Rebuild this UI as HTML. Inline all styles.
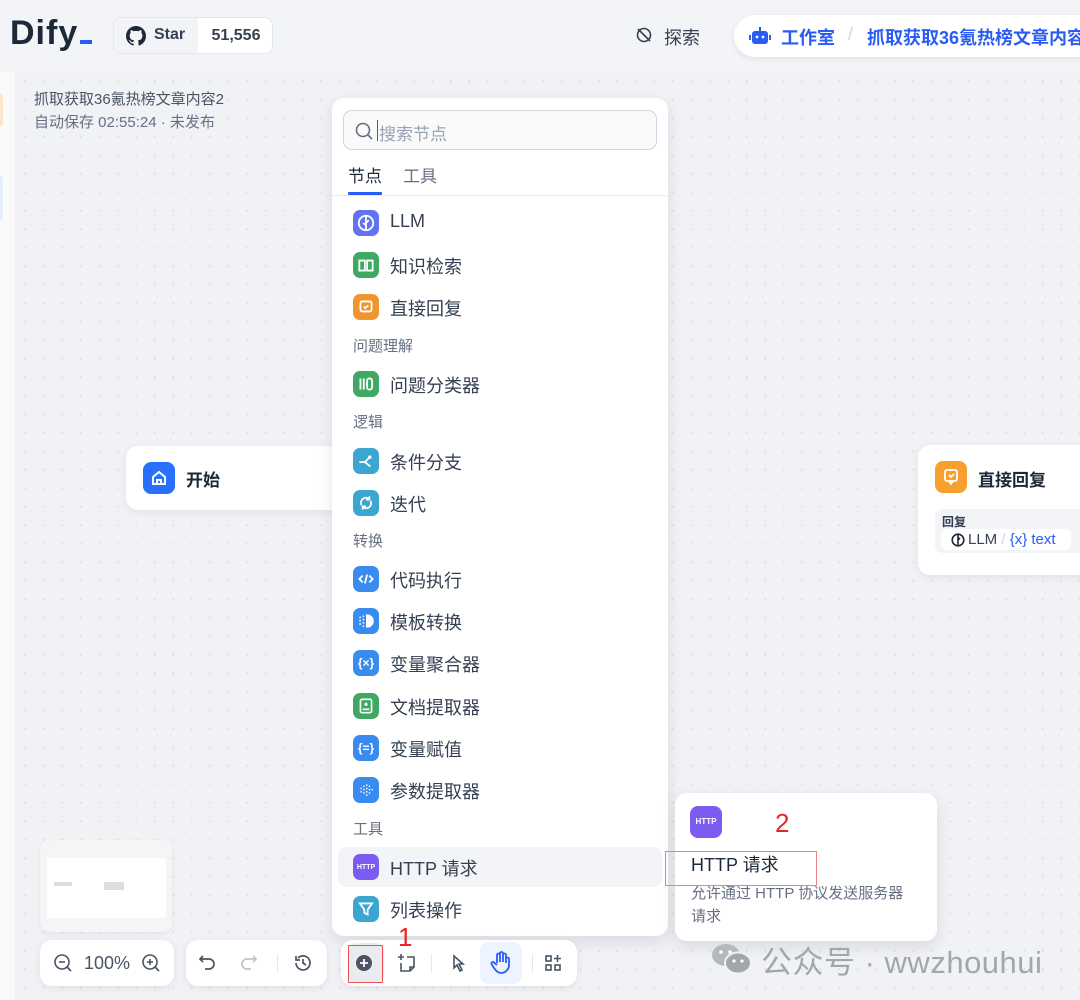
<!DOCTYPE html>
<html><head><meta charset="utf-8"><style>
*{box-sizing:border-box;margin:0;padding:0}
body{width:1080px;height:1000px;overflow:hidden;background:#f2f4f7;font-family:"Liberation Sans","Noto Sans CJK SC",sans-serif;position:relative;color:#1d2939}
.abs{position:absolute}
.canvas{left:16px;top:72px;width:1064px;height:928px;background-color:#f0f2f6;background-image:radial-gradient(#dfe2e8 1px,transparent 1.2px);background-size:18.5px 18.5px}
.card{background:#fff;border-radius:12px;box-shadow:0 2px 8px rgba(16,24,40,.08)}
.ic{position:absolute;width:26px;height:26px;border-radius:7px;left:21px;display:flex;align-items:center;justify-content:center;color:#fff;font-size:11px;font-weight:bold}
.ic svg{width:20px;height:20px}
.row{position:absolute;left:0;width:336px;height:40px}
.row span.t{position:absolute;left:58px;top:8px;font-size:18px;color:#354052}
.lbl{position:absolute;left:21px;font-size:15px;color:#676f83}
.tb{height:46px;top:940px}
</style></head><body>
<div class="abs" style="left:10px;top:14px;font-size:34px;font-weight:bold;color:#1d2939;letter-spacing:1px">Dify<span style="display:inline-block;width:12px;height:4px;background:#2a5bf5;margin-left:2px"></span></div>
<div class="abs" style="left:113px;top:17px;width:160px;height:37px;border:1px solid #e4e7ec;border-radius:8px;background:#f2f4f7;overflow:hidden">
 <svg class="abs" style="left:12px;top:8px" width="20" height="20" viewBox="0 0 16 16"><path fill="#1d2939" d="M8 0C3.58 0 0 3.58 0 8c0 3.540 2.29 6.53 5.470 7.590.4.07.55-.17.55-.38v-1.330c-2.230.48-2.7-1.070-2.7-1.070-.36-.93-.89-1.170-.89-1.170-.73-.5.06-.49.06-.49.8.06 1.230.83 1.230.83.71 1.220 1.870.87 2.330.66.07-.52.28-.87.51-1.070-1.780-.2-3.640-.89-3.640-3.950 0-.87.31-1.590.82-2.150-.08-.2-.36-1.020.08-2.120 0 0 .67-.21 2.2.82a7.6 7.6 0 0 1 4 0c1.530-1.040 2.2-.82 2.2-.82.44 1.1.16 1.920.08 2.120.51.56.82 1.270.82 2.150 0 3.070-1.870 3.750-3.650 3.950.29.25.54.73.54 1.480v2.2c0 .21.15.46.55.38A8 8 0 0 0 16 8c0-4.420-3.580-8-8-8z"/></svg>
 <span class="abs" style="left:40px;top:8px;font-size:16px;font-weight:bold;color:#354052">Star</span>
 <div class="abs" style="left:84px;top:0;width:76px;height:37px;background:#fff;font-size:16px;font-weight:bold;color:#354052;text-align:center;line-height:36px">51,556</div>
</div>
<svg class="abs" style="left:635px;top:26px" width="18" height="18" viewBox="0 0 18 18" fill="none" stroke="#354052" stroke-width="1.6"><circle cx="9" cy="9" r="6.5"/><path d="M3 3l12 12"/></svg>
<div class="abs" style="left:664px;top:24px;font-size:18px;color:#354052">探索</div>
<div class="abs" style="left:734px;top:15px;width:400px;height:42px;background:#fff;border-radius:21px;box-shadow:0 2px 6px rgba(16,24,40,.08)">
 <svg class="abs" style="left:15px;top:11px" width="22" height="20" viewBox="0 0 22 20"><rect x="3" y="5" width="16" height="13" rx="3" fill="#2a5bf5"/><rect x="10" y="1" width="2" height="4" fill="#2a5bf5"/><rect x="0" y="9" width="2" height="5" fill="#2a5bf5"/><rect x="20" y="9" width="2" height="5" fill="#2a5bf5"/><circle cx="8" cy="11" r="1.4" fill="#fff"/><circle cx="14" cy="11" r="1.4" fill="#fff"/></svg>
 <span class="abs" style="left:47px;top:9px;font-size:18px;font-weight:bold;color:#2a5bf5">工作室</span>
 <span class="abs" style="left:114px;top:9px;font-size:18px;color:#d0d5dd">/</span>
 <span class="abs" style="left:133px;top:9px;font-size:18px;font-weight:bold;color:#2a5bf5;white-space:nowrap">抓取获取36氪热榜文章内容2</span>
</div>
<div class="abs" style="left:0;top:72px;width:16px;height:928px;background:#fafafb;border-right:1px solid #eef0f3"></div>
<div class="abs" style="left:0;top:94px;width:3px;height:32px;background:#fde5c8;border-radius:0 3px 3px 0"></div>
<div class="abs" style="left:0;top:176px;width:3px;height:44px;background:#e6edfe;border-radius:0 3px 3px 0"></div>
<div class="abs canvas"></div>
<div class="abs" style="left:34px;top:88px;font-size:15px;color:#495464">抓取获取36氪热榜文章内容2</div>
<div class="abs" style="left:34px;top:111px;font-size:15px;color:#676f83">自动保存 02:55:24 · 未发布</div>
<div class="abs card" style="left:126px;top:446px;width:220px;height:64px">
 <div class="abs" style="left:17px;top:16px;width:32px;height:32px;border-radius:8px;background:#2970ff"><svg width="32" height="32" viewBox="0 0 32 32" fill="none" stroke="#fff" stroke-width="2"><path d="M10 15l6-5 6 5v7h-12z"/><path d="M14 22v-4h4v4"/></svg></div>
 <span class="abs" style="left:60px;top:20px;font-size:17px;font-weight:bold">开始</span>
</div>
<div class="abs card" style="left:918px;top:445px;width:180px;height:130px">
 <div class="abs" style="left:17px;top:16px;width:32px;height:32px;border-radius:8px;background:#f79009;opacity:.85"><svg width="32" height="32" viewBox="0 0 32 32" fill="none" stroke="#fff" stroke-width="1.8"><rect x="10" y="9" width="12" height="11" rx="2"/><path d="M14 14l2 2 3-3M14 20l2 3 2-3"/></svg></div>
 <span class="abs" style="left:60px;top:21px;font-size:17px;font-weight:bold">直接回复</span>
 <div class="abs" style="left:17px;top:64px;width:170px;height:44px;background:#f2f4f7;border-radius:8px">
  <span class="abs" style="left:7px;top:4px;font-size:12px;font-weight:bold;color:#354052">回复</span>
  <div class="abs" style="left:6px;top:20px;width:130px;height:21px;background:#fff;border-radius:6px;font-size:15px;line-height:21px;padding-left:27px;color:#354052;white-space:nowrap">
   <svg class="abs" style="left:10px;top:4px" width="14" height="14" viewBox="0 0 14 14" fill="none" stroke="#1d2939" stroke-width="1.6"><circle cx="7" cy="7" r="5.8"/><path d="M7 2v10M7 7l2-2"/></svg>
   LLM <span style="color:#d0d5dd">/</span> <span style="color:#2a5bf5">{x} text</span></div>
 </div>
</div>
<div class="abs card" style="left:332px;top:98px;width:336px;height:838px;box-shadow:0 6px 16px rgba(16,24,40,.1)">
 <div class="abs" style="left:11px;top:12px;width:314px;height:40px;border:1px solid #d0d5dd;border-radius:9px;background:#fafafb">
  <svg class="abs" style="left:10px;top:10px" width="20" height="20" viewBox="0 0 20 20" fill="none" stroke="#676f83" stroke-width="1.6"><circle cx="9" cy="9" r="6.5"/><path d="M14 14l4 4"/></svg>
  <div class="abs" style="left:33px;top:9px;width:1px;height:21px;background:#2a5bf5"></div>
  <span class="abs" style="left:35px;top:9px;font-size:17px;color:#98a2b3">搜索节点</span>
 </div>
 <span class="abs" style="left:16px;top:64px;font-size:17px;color:#1d2939">节点</span>
 <span class="abs" style="left:71px;top:64px;font-size:17px;color:#676f83">工具</span>
 <div class="abs" style="left:16px;top:94px;width:34px;height:3px;background:#2a5bf5;border-radius:1px"></div>
 <div class="abs" style="left:0;top:97px;width:336px;height:1px;background:#eaecf0"></div>

 <div class="row" style="top:105px"><div class="ic" style="top:7px;background:#6172f3"><svg viewBox="0 0 18 18" fill="none" stroke="#fff" stroke-width="1.6"><circle cx="9" cy="9" r="6.5"/><path d="M9 3v12M9 9l2.5-2.5M9 11l-2.5-2"/></svg></div><span class="t">LLM</span></div>
 <div class="row" style="top:147px"><div class="ic" style="top:7px;background:#3fa964"><svg viewBox="0 0 18 18" fill="none" stroke="#fff" stroke-width="1.6"><path d="M3 5h5v9H3zM10 5h5v9h-5z"/></svg></div><span class="t">知识检索</span></div>
 <div class="row" style="top:189px"><div class="ic" style="top:7px;background:#f09530"><svg viewBox="0 0 18 18" fill="none" stroke="#fff" stroke-width="1.6"><rect x="4" y="4" width="10" height="9" rx="1.5"/><path d="M7 8.5l1.5 1.5 2.5-2.5"/></svg></div><span class="t">直接回复</span></div>
 <div class="lbl" style="top:237px">问题理解</div>
 <div class="row" style="top:266px"><div class="ic" style="top:7px;background:#3fa964"><svg viewBox="0 0 18 18" fill="none" stroke="#fff" stroke-width="1.6"><path d="M4 4v10M7 4v10"/><rect x="10" y="4" width="4.5" height="10" rx="2"/></svg></div><span class="t">问题分类器</span></div>
 <div class="lbl" style="top:313px">逻辑</div>
 <div class="row" style="top:343px"><div class="ic" style="top:7px;background:#3ba6d0"><svg viewBox="0 0 18 18" fill="none" stroke="#fff" stroke-width="1.6"><path d="M3 10h5l5-5M8 10l5 4M11 5h2v2"/></svg></div><span class="t">条件分支</span></div>
 <div class="row" style="top:385px"><div class="ic" style="top:7px;background:#3ba6d0"><svg viewBox="0 0 18 18" fill="none" stroke="#fff" stroke-width="1.6"><path d="M5 11a4.5 4.5 0 0 1 7-5.5M13 7a4.5 4.5 0 0 1-7 5.5M12 3v3h-3M6 15v-3h3"/></svg></div><span class="t">迭代</span></div>
 <div class="lbl" style="top:432px">转换</div>
 <div class="row" style="top:461px"><div class="ic" style="top:7px;background:#3a8bf0"><svg viewBox="0 0 18 18" fill="none" stroke="#fff" stroke-width="1.6"><path d="M6 6l-3 3 3 3M12 6l3 3-3 3M10 5l-2 8"/></svg></div><span class="t">代码执行</span></div>
 <div class="row" style="top:503px"><div class="ic" style="top:7px;background:#3a8bf0"><svg viewBox="0 0 18 18"><path d="M9 3h1a6 6 0 0 1 0 12H9z" fill="#fff"/><g fill="#fff"><rect x="3" y="5" width="1.4" height="1.4"/><rect x="3" y="8" width="1.4" height="1.4"/><rect x="3" y="11" width="1.4" height="1.4"/><rect x="6" y="4" width="1.4" height="1.4"/><rect x="6" y="7" width="1.4" height="1.4"/><rect x="6" y="10" width="1.4" height="1.4"/><rect x="6" y="13" width="1.4" height="1.4"/></g></svg></div><span class="t">模板转换</span></div>
 <div class="row" style="top:545px"><div class="ic" style="top:7px;background:#3a8bf0;font-size:12px">{×}</div><span class="t">变量聚合器</span></div>
 <div class="row" style="top:588px"><div class="ic" style="top:7px;background:#3fa964"><svg viewBox="0 0 18 18" fill="none" stroke="#fff" stroke-width="1.5"><rect x="4" y="3" width="10" height="12" rx="1.5"/><path d="M6 12h6M9 6v3M7.5 7.5h3"/></svg></div><span class="t">文档提取器</span></div>
 <div class="row" style="top:630px"><div class="ic" style="top:7px;background:#3a8bf0;font-size:12px">{=}</div><span class="t">变量赋值</span></div>
 <div class="row" style="top:672px"><div class="ic" style="top:7px;background:#3a8bf0"><svg viewBox="0 0 18 18" fill="#fff"><rect x="4" y="7" width="1.3" height="1.3"/><rect x="4" y="10" width="1.3" height="1.3"/><rect x="6.5" y="5" width="1.3" height="1.3"/><rect x="6.5" y="8" width="1.3" height="1.3"/><rect x="6.5" y="11" width="1.3" height="1.3"/><rect x="9" y="4" width="1.3" height="1.3"/><rect x="9" y="7" width="1.3" height="1.3"/><rect x="9" y="10" width="1.3" height="1.3"/><rect x="9" y="13" width="1.3" height="1.3"/><rect x="11.5" y="5" width="1.3" height="1.3"/><rect x="11.5" y="8" width="1.3" height="1.3"/><rect x="11.5" y="11" width="1.3" height="1.3"/><rect x="14" y="8" width="1.3" height="1.3"/></svg></div><span class="t">参数提取器</span></div>
 <div class="lbl" style="top:720px">工具</div>
 <div class="abs" style="left:6px;top:749px;width:324px;height:40px;background:#f2f4f7;border-radius:8px"></div>
 <div class="row" style="top:749px"><div class="ic" style="top:7px;background:#7c5cf0;font-size:7px">HTTP</div><span class="t">HTTP 请求</span></div>
 <div class="row" style="top:791px"><div class="ic" style="top:7px;background:#3ba6d0"><svg viewBox="0 0 18 18" fill="none" stroke="#fff" stroke-width="1.6"><path d="M3.5 4h11l-4 5.5V14l-3-1.5v-3z"/></svg></div><span class="t">列表操作</span></div>
</div>
<div class="abs card" style="left:675px;top:793px;width:262px;height:148px;box-shadow:0 6px 16px rgba(16,24,40,.1)">
 <div class="abs" style="left:15px;top:13px;width:32px;height:32px;border-radius:8px;background:#7c5cf0;color:#fff;font-size:8px;font-weight:bold;text-align:center;line-height:32px">HTTP</div>
 <span class="abs" style="left:16px;top:58px;font-size:18px;color:#1d2939">HTTP 请求</span>
 <span class="abs" style="left:16px;top:89px;width:240px;white-space:nowrap;font-size:15px;line-height:23px;color:#676f83">允许通过 HTTP 协议发送服务器<br>请求</span>
</div>
<div class="abs" style="left:40px;top:840px;width:132px;height:92px;background:#f5f5f6;border-radius:10px;box-shadow:0 2px 6px rgba(16,24,40,.06)">
 <div class="abs" style="left:7px;top:18px;width:119px;height:60px;background:#fff"></div>
 <div class="abs" style="left:14px;top:42px;width:18px;height:4px;background:#ddd"></div>
 <div class="abs" style="left:64px;top:42px;width:20px;height:8px;background:#ddd"></div>
</div>
<div class="abs card tb" style="left:40px;width:134px">
 <svg class="abs" style="left:13px;top:13px" width="20" height="20" viewBox="0 0 20 20" fill="none" stroke="#495464" stroke-width="1.6"><circle cx="9" cy="9" r="7"/><path d="M14 14l4 4M6 9h6"/></svg>
 <span class="abs" style="left:44px;top:13px;font-size:18px;color:#495464">100%</span>
 <svg class="abs" style="left:101px;top:13px" width="20" height="20" viewBox="0 0 20 20" fill="none" stroke="#495464" stroke-width="1.6"><circle cx="9" cy="9" r="7"/><path d="M14 14l4 4M6 9h6M9 6v6"/></svg>
</div>
<div class="abs card tb" style="left:186px;width:141px">
 <svg class="abs" style="left:11px;top:13px" width="20" height="20" viewBox="0 0 20 20" fill="none" stroke="#495464" stroke-width="1.7"><path d="M6 3L3 6l3 3M3 6h9a5 5 0 0 1 0 10H8"/></svg>
 <svg class="abs" style="left:53px;top:13px" width="20" height="20" viewBox="0 0 20 20" fill="none" stroke="#c0c5cd" stroke-width="1.7"><path d="M14 3l3 3-3 3M17 6H8a5 5 0 0 0 0 10h4"/></svg>
 <div class="abs" style="left:91px;top:14px;width:1px;height:18px;background:#e4e7ec"></div>
 <svg class="abs" style="left:107px;top:13px" width="20" height="20" viewBox="0 0 20 20" fill="none" stroke="#495464" stroke-width="1.7"><path d="M3 10a7 7 0 1 0 2-5M3 3v4h4M10 6v4l3 2"/></svg>
</div>
<div class="abs card tb" style="left:341px;width:236px">
 <div class="abs" style="left:7px;top:3px;width:36px;height:40px;background:#eaecf0;border-radius:8px"></div>
 <svg class="abs" style="left:13px;top:13px" width="20" height="20" viewBox="0 0 20 20"><circle cx="10" cy="10" r="8" fill="#495464"/><path d="M10 6v8M6 10h8" stroke="#fff" stroke-width="1.8"/></svg>
 <svg class="abs" style="left:55px;top:12px" width="22" height="22" viewBox="0 0 22 22" fill="none" stroke="#495464" stroke-width="1.6"><path d="M5 2v6M2 5h6M5 11v8h9l4-4V5h-7M14 19v-4h4"/></svg>
 <div class="abs" style="left:90px;top:14px;width:1px;height:18px;background:#e4e7ec"></div>
 <svg class="abs" style="left:108px;top:13px" width="20" height="20" viewBox="0 0 20 20" fill="none" stroke="#495464" stroke-width="1.6"><path d="M5 3l9 8h-4l3 6-2 1-3-6-3 3z"/></svg>
 <div class="abs" style="left:139px;top:2px;width:42px;height:42px;background:#eef4ff;border-radius:9px"></div>
 <svg class="abs" style="left:149px;top:11px" width="22" height="24" viewBox="0 0 22 24" fill="none" stroke="#2a5bf5" stroke-width="1.8"><path d="M7 12V4a1.5 1.5 0 0 1 3 0v7M10 11V2.5a1.5 1.5 0 0 1 3 0V11M13 11V4a1.5 1.5 0 0 1 3 0v8M16 8a1.5 1.5 0 0 1 3 0v6a8 8 0 0 1-8 8c-3 0-5-2-7-5l-2.5-4a1.5 1.5 0 0 1 2.5-1.5L7 14"/></svg>
 <div class="abs" style="left:191px;top:14px;width:1px;height:18px;background:#e4e7ec"></div>
 <svg class="abs" style="left:202px;top:13px" width="20" height="20" viewBox="0 0 20 20" fill="none" stroke="#495464" stroke-width="1.6"><rect x="3" y="3" width="5" height="5"/><rect x="3" y="12" width="5" height="5"/><rect x="12" y="12" width="5" height="5"/><path d="M14.5 2v7M11 5.5h7"/></svg>
</div>
<div class="abs" style="left:348px;top:945px;width:35px;height:38px;border:1px solid #f05050"></div>
<div class="abs" style="left:398px;top:922px;font-size:26px;color:#e8262a">1</div>
<div class="abs" style="left:665px;top:851px;width:152px;height:35px;border:1px solid #f08080"></div>
<div class="abs" style="left:775px;top:808px;font-size:26px;color:#e8262a">2</div>
<svg class="abs" style="left:711px;top:942px" width="42" height="34" viewBox="0 0 42 34"><ellipse cx="15" cy="13" rx="14" ry="11" fill="#b5b8bd"/><ellipse cx="27" cy="21" rx="13" ry="10.5" fill="#a3a6ab" stroke="#f0f2f6" stroke-width="2"/><circle cx="10" cy="10" r="1.8" fill="#fff"/><circle cx="19" cy="10" r="1.8" fill="#fff"/><circle cx="23" cy="19" r="1.6" fill="#fff"/><circle cx="31" cy="19" r="1.6" fill="#fff"/></svg>
<div class="abs" style="left:761px;top:937px;font-size:31px;color:#a3a6ab;white-space:nowrap;letter-spacing:0.5px">公众号 · wwzhouhui</div>
</body></html>
